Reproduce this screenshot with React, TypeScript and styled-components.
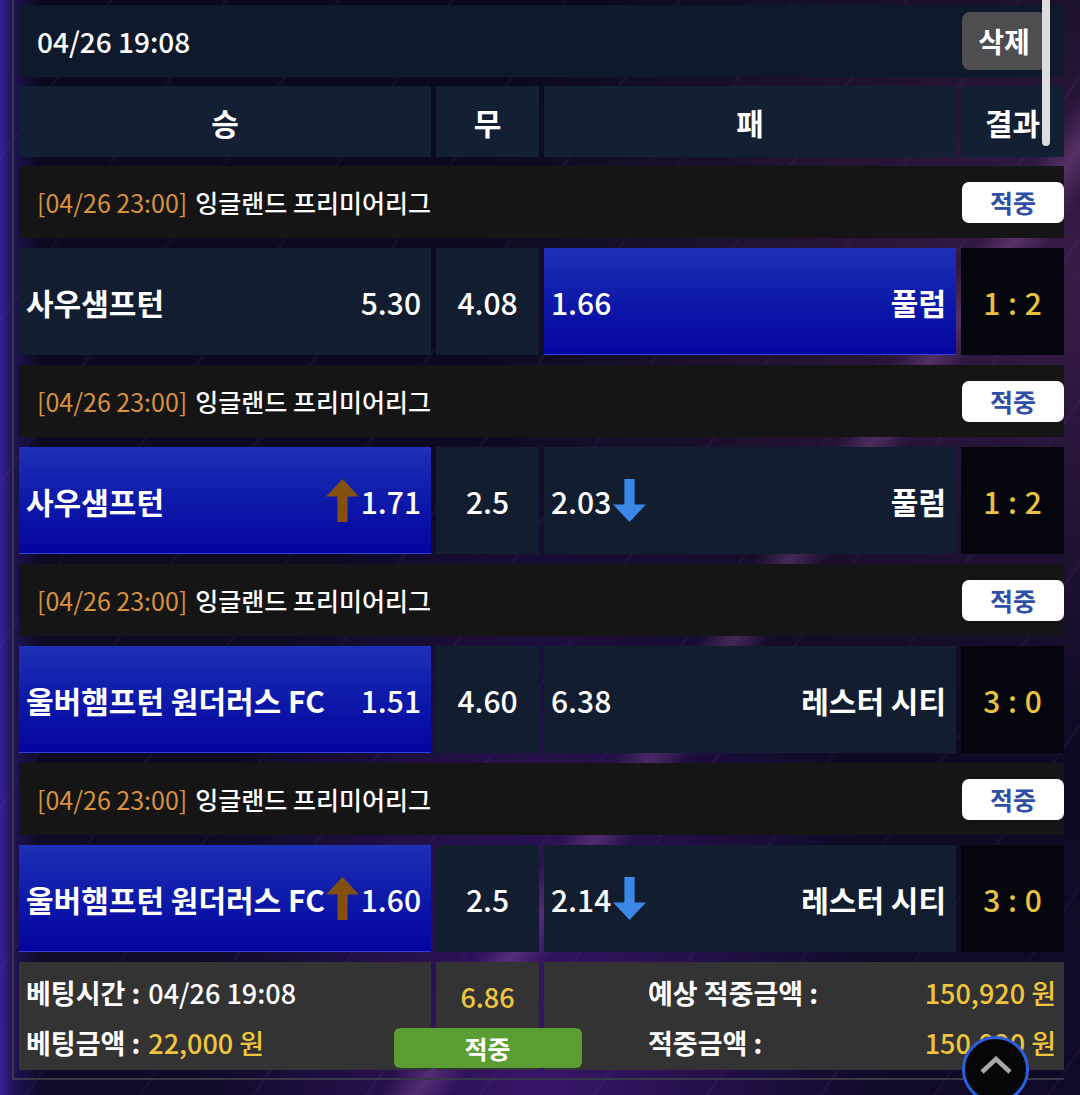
import React from "react";
import styled, { createGlobalStyle, css } from "styled-components";

const GlobalStyle = createGlobalStyle`
  html, body { margin: 0; padding: 0; }
  body {
    background: #0b0a1e;
    font-family: "Noto Sans CJK KR", "Noto Sans", sans-serif;
    color: #fff;
  }
  * { box-sizing: border-box; }
`;

const Page = styled.div`
  position: relative;
  width: 1080px;
  height: 1095px;
  overflow: hidden;
  background:
    repeating-linear-gradient(125deg, transparent 0 90px, rgba(150, 90, 210, 0.06) 90px 93px),
    linear-gradient(125deg, transparent 62%, rgba(190, 110, 200, 0.28) 64%, transparent 66%),
    radial-gradient(ellipse at 100% 25%, rgba(160, 70, 170, 0.3), transparent 40%),
    linear-gradient(90deg, rgba(70, 40, 190, 0.75) 0px, rgba(50, 30, 140, 0.5) 12px, transparent 40px),
    radial-gradient(ellipse at 50% 100%, rgba(80, 30, 150, 0.6), transparent 45%),
    linear-gradient(180deg, #0a0a1c, #100a28);
`;

const Frame = styled.div`
  margin-left: 12px;
  width: 1052px;
  border-left: 2px solid #3a3848;
  border-bottom: 2px solid #3a3848;
  padding: 5px 0 8px 5px;
  display: flex;
  flex-direction: column;
  gap: 9px;
`;

const HeaderBar = styled.div`
  height: 72px;
  background: #0e1a2b;
  display: flex;
  align-items: center;
  justify-content: space-between;
  padding: 0 18px 0 18px;
  font-size: 28px;
  font-weight: 500;
`;

const DeleteButton = styled.button`
  width: 84px;
  height: 58px;
  border: none;
  border-radius: 8px;
  background: #4e4e50;
  color: #fff;
  font-family: inherit;
  font-size: 28px;
  font-weight: 700;
  padding: 0;
`;

const Grid = styled.div<{ $h: number }>`
  display: grid;
  grid-template-columns: 412px 103px 412px 103px;
  column-gap: 5px;
  height: ${(p) => p.$h}px;
`;

const HeadCell = styled.div`
  background: #131f33;
  display: flex;
  align-items: center;
  justify-content: center;
  font-size: 30px;
  font-weight: 700;
`;

const Groups = styled.div`
  display: flex;
  flex-direction: column;
  gap: 10px;
`;

const LeagueRow = styled.div`
  height: 72px;
  background: #151515;
  display: flex;
  align-items: center;
  justify-content: space-between;
  padding-left: 18px;
  font-size: 25px;
  font-weight: 500;
`;

const LeagueTime = styled.span`
  color: #d8913d;
  font-weight: 400;
  margin-right: 8px;
`;

const HitBadge = styled.div`
  width: 102px;
  height: 41px;
  background: #fff;
  border-radius: 7px;
  display: flex;
  align-items: center;
  justify-content: center;
  color: #2f4fa6;
  font-size: 25px;
  font-weight: 700;
`;

const TeamCell = styled.div<{ $selected?: boolean }>`
  display: flex;
  align-items: center;
  justify-content: space-between;
  padding: 0 10px 0 7px;
  font-size: 30px;
  background: #121e30;
  ${(p) =>
    p.$selected &&
    css`
      background: linear-gradient(180deg, #1d30b6 0%, #0c17a8 55%, #0404a0 100%);
      box-shadow: inset 0 -1px 0 #3040d8;
    `}
`;

const TeamName = styled.span`
  font-weight: 700;
  white-space: nowrap;
`;

const OddsGroup = styled.span`
  display: flex;
  align-items: center;
  gap: 2px;
  font-weight: 500;
`;

const DrawCell = styled.div`
  background: #121e30;
  display: flex;
  align-items: center;
  justify-content: center;
  font-size: 30px;
  font-weight: 500;
`;

const ResultCell = styled.div`
  background: #05050e;
  display: flex;
  align-items: center;
  justify-content: center;
  font-size: 30px;
  font-weight: 500;
  color: #e9c23f;
  word-spacing: 1px;
`;

const FooterCell = styled.div`
  background: #333333;
  font-size: 27px;
  font-weight: 700;
`;

const FooterLeft = styled(FooterCell)`
  padding: 5px 7px 0 7px;
  display: flex;
  flex-direction: column;
`;

const FooterLine = styled.div`
  height: 50px;
  display: flex;
  align-items: center;
  white-space: nowrap;
`;

const Light = styled.span<{ $yellow?: boolean }>`
  font-weight: 500;
  color: ${(p) => (p.$yellow ? "#f0c53e" : "#fff")};
  margin-left: 8px;
`;

const FooterMid = styled(FooterCell)`
  position: relative;
  display: flex;
  justify-content: center;
  padding-top: 15px;
  color: #f0c53e;
  font-weight: 500;
`;

const GreenButton = styled.div`
  position: absolute;
  left: 50%;
  bottom: 2px;
  transform: translateX(-50%);
  width: 188px;
  height: 40px;
  border-radius: 6px;
  background: #5a9d33;
  color: #fff;
  font-size: 25px;
  font-weight: 700;
  display: flex;
  align-items: center;
  justify-content: center;
  z-index: 2;
`;

const FooterRight = styled(FooterCell)`
  grid-column: span 2;
  padding: 5px 8px 0 104px;
  display: grid;
  grid-template-columns: auto 1fr;
  grid-auto-rows: 50px;
  align-items: center;
`;

const Amount = styled.span`
  text-align: right;
  color: #f0c53e;
  font-weight: 500;
`;

const Scrollbar = styled.div`
  position: absolute;
  left: 1042px;
  top: -8px;
  width: 8px;
  height: 154px;
  border-radius: 4px;
  background: #dcdcdc;
`;

const TopButton = styled.div`
  position: absolute;
  left: 962px;
  top: 1036px;
  width: 67px;
  height: 67px;
  border-radius: 50%;
  background: #060608;
  border: 3px solid #2b5fdc;
  display: flex;
  align-items: flex-start;
  justify-content: center;
  padding-top: 17px;
`;

const UpArrow = () => (
  <svg width="33" height="43" viewBox="0 0 32 42">
    <polygon points="16,0 32,17 21,17 21,42 11,42 11,17 0,17" fill="#84500f" />
  </svg>
);

const DownArrow = () => (
  <svg width="33" height="43" viewBox="0 0 32 42">
    <polygon points="11,0 21,0 21,25 32,25 16,42 0,25 11,25" fill="#3b88e8" />
  </svg>
);

type Match = {
  home: string;
  away: string;
  homeOdds: string;
  draw: string;
  awayOdds: string;
  score: string;
  pick: "home" | "away";
  homeUp?: boolean;
  awayDown?: boolean;
};

const matches: Match[] = [
  { home: "사우샘프턴", away: "풀럼", homeOdds: "5.30", draw: "4.08", awayOdds: "1.66", score: "1 : 2", pick: "away" },
  { home: "사우샘프턴", away: "풀럼", homeOdds: "1.71", draw: "2.5", awayOdds: "2.03", score: "1 : 2", pick: "home", homeUp: true, awayDown: true },
  { home: "울버햄프턴 원더러스 FC", away: "레스터 시티", homeOdds: "1.51", draw: "4.60", awayOdds: "6.38", score: "3 : 0", pick: "home" },
  { home: "울버햄프턴 원더러스 FC", away: "레스터 시티", homeOdds: "1.60", draw: "2.5", awayOdds: "2.14", score: "3 : 0", pick: "home", homeUp: true, awayDown: true },
];

export default function App() {
  return (
    <Page>
      <GlobalStyle />
      <Frame>
        <HeaderBar>
          <span>04/26 19:08</span>
          <DeleteButton>삭제</DeleteButton>
        </HeaderBar>
        <Grid $h={71}>
          <HeadCell>승</HeadCell>
          <HeadCell>무</HeadCell>
          <HeadCell>패</HeadCell>
          <HeadCell>결과</HeadCell>
        </Grid>
        <Groups>
          {matches.map((m, i) => (
            <React.Fragment key={i}>
              <LeagueRow>
                <span>
                  <LeagueTime>[04/26 23:00]</LeagueTime>잉글랜드 프리미어리그
                </span>
                <HitBadge>적중</HitBadge>
              </LeagueRow>
              <Grid $h={107}>
                <TeamCell $selected={m.pick === "home"}>
                  <TeamName>{m.home}</TeamName>
                  <OddsGroup>
                    {m.homeUp && <UpArrow />}
                    {m.homeOdds}
                  </OddsGroup>
                </TeamCell>
                <DrawCell>{m.draw}</DrawCell>
                <TeamCell $selected={m.pick === "away"}>
                  <OddsGroup>
                    {m.awayOdds}
                    {m.awayDown && <DownArrow />}
                  </OddsGroup>
                  <TeamName>{m.away}</TeamName>
                </TeamCell>
                <ResultCell>{m.score}</ResultCell>
              </Grid>
            </React.Fragment>
          ))}
          <Grid $h={108}>
            <FooterLeft>
              <FooterLine>
                베팅시간 :<Light>04/26 19:08</Light>
              </FooterLine>
              <FooterLine>
                베팅금액 :<Light $yellow>22,000 원</Light>
              </FooterLine>
            </FooterLeft>
            <FooterMid>
              6.86
              <GreenButton>적중</GreenButton>
            </FooterMid>
            <FooterRight>
              <span>예상 적중금액 :</span>
              <Amount>150,920 원</Amount>
              <span>적중금액 :</span>
              <Amount>150,920 원</Amount>
            </FooterRight>
          </Grid>
        </Groups>
      </Frame>
      <Scrollbar />
      <TopButton>
        <svg width="32" height="18" viewBox="0 0 32 18">
          <polyline points="2,16 16,3 30,16" fill="none" stroke="#a9a9a9" strokeWidth="4.5" />
        </svg>
      </TopButton>
    </Page>
  );
}
